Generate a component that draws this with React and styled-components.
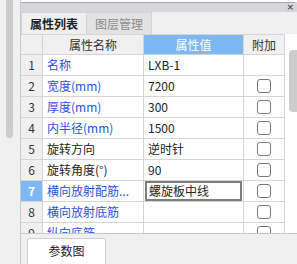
import React from "react";
import styled, { createGlobalStyle } from "styled-components";

const rows = [
  { no: 1, name: "名称", value: "LXB-1", link: true, check: false },
  { no: 2, name: "宽度(mm)", value: "7200", link: true, check: true },
  { no: 3, name: "厚度(mm)", value: "300", link: true, check: true },
  { no: 4, name: "内半径(mm)", value: "1500", link: true, check: true },
  { no: 5, name: "旋转方向", value: "逆时针", link: false, check: true },
  { no: 6, name: "旋转角度(°)", value: "90", link: false, check: true },
  { no: 7, name: "横向放射配筋...", value: "螺旋板中线", link: true, check: true, selected: true },
  { no: 8, name: "横向放射底筋", value: "", link: true, check: true },
  { no: 9, name: "纵向底筋", value: "", link: true, check: true },
];

const GlobalStyle = createGlobalStyle`
  body {
    margin: 0;
    background: #f0f0f0;
    font-family: "Noto Sans CJK SC", "Noto Sans", sans-serif;
    font-size: 12px;
    color: #222;
  }
`;

const Screen = styled.div`
  width: 297px;
  height: 264px;
  display: flex;
  overflow: hidden;
  background: #f0f0f0;
`;

const LeftStrip = styled.div`
  width: 21px;
  padding-left: 6px;
  box-sizing: border-box;
  border-right: 1px solid #c9c9c9;
`;

const LeftThumb = styled.div`
  width: 7px;
  height: 138px;
  background: #cdcdcd;
  border-radius: 0 0 4px 4px;
`;

const Panel = styled.div`
  flex: 1;
  display: flex;
  flex-direction: column;
  min-width: 0;
`;

const TopStub = styled.div`
  height: 8px;
  background: #fff;
  border-top: 2px solid #fff;
  box-sizing: border-box;
  position: relative;

  &::before {
    content: "";
    position: absolute;
    left: 0;
    right: 2px;
    top: 0;
    height: 1px;
    background: #a9a9a9;
  }
`;

const TitleBar = styled.div`
  height: 10px;
  background: #d6d7da;
  display: flex;
  justify-content: flex-end;
  align-items: center;
  padding-right: 3px;
`;

const Close = styled.span`
  font-family: "DejaVu Sans", sans-serif;
  font-size: 9px;
  line-height: 10px;
  color: #555;
  font-weight: bold;
`;

const TabStrip = styled.div`
  height: 24px;
  display: flex;
  align-items: flex-end;
  background: #f0f0f0;
`;

const Tab = styled.div`
  height: 22px;
  box-sizing: border-box;
  padding: 0 8px;
  display: flex;
  align-items: center;
  font-size: 12px;
  line-height: 22px;
  border: 1px solid #d4d4d4;
  border-bottom: none;
  background: ${(p) => (p.active ? "#f0f0f0" : "#e2e2e2")};
  color: ${(p) => (p.active ? "#222" : "#8c8c8c")};
  font-weight: ${(p) => (p.active ? "bold" : "normal")};
  margin-left: ${(p) => (p.active ? "0" : "-1px")};
`;

const TableArea = styled.div`
  height: 199px;
  display: flex;
  background: #fff;
`;

const Grid = styled.div`
  width: 264px;
  height: 100%;
  overflow: hidden;
  display: grid;
  grid-template-columns: 22px 101px 100px 41px;
  grid-auto-rows: 21px;
  align-content: start;
`;

const Cell = styled.div`
  box-sizing: border-box;
  border-right: 1px solid #d5d5d5;
  border-bottom: 1px solid #d5d5d5;
  display: flex;
  align-items: center;
  justify-content: ${(p) => (p.center ? "center" : "flex-start")};
  padding: 0 ${(p) => (p.center ? "0" : "4px")};
  white-space: nowrap;
  overflow: hidden;
  font-size: 12px;
  line-height: 20px;
  background: ${(p) => p.bg || "#fff"};
  color: ${(p) => p.color || "#222"};
  font-weight: ${(p) => (p.bold ? "bold" : "normal")};
`;

const HeadCell = styled(Cell)`
  border-top: 1px solid #d5d5d5;
  color: ${(p) => p.color || "#333"};
  background: ${(p) => p.bg || "#f0f0f0"};
`;

const EditBox = styled.div`
  flex: 1;
  height: 20px;
  box-sizing: border-box;
  margin: 0 -3px;
  padding: 0 2px;
  border: 2px solid #7d7d7d;
  line-height: 16px;
`;

const Check = styled.span`
  width: 14px;
  height: 14px;
  box-sizing: border-box;
  border: 1px solid #7a7a7a;
  border-radius: 3px;
  background: #fff;
`;

const ScrollTrack = styled.div`
  flex: 1;
  padding: 16px 0 0 4px;
`;

const ScrollThumb = styled.div`
  width: 8px;
  height: 62px;
  background: #cdcdcd;
  border-radius: 4px 0 0 4px;
`;

const BottomBar = styled.div`
  flex: 1;
  border-top: 1px solid #cacaca;
  background: #f0f0f0;
  padding: 4px 0 0 6px;
`;

const BottomTab = styled.div`
  width: 79px;
  height: 30px;
  box-sizing: border-box;
  background: #fff;
  border: 1px solid #cfcfcf;
  border-radius: 3px 3px 0 0;
  text-align: center;
  padding-top: 4px;
  font-size: 12px;
  line-height: 16px;
  color: #222;
`;

const BLUE = "#7db8f4";

const App = () => (
  <>
    <GlobalStyle />
    <Screen>
      <LeftStrip>
        <LeftThumb />
      </LeftStrip>
      <Panel>
        <TopStub />
        <TitleBar>
          <Close>×</Close>
        </TitleBar>
        <TabStrip>
          <Tab active>属性列表</Tab>
          <Tab>图层管理</Tab>
        </TabStrip>
        <TableArea>
          <Grid>
            <HeadCell />
            <HeadCell center>属性名称</HeadCell>
            <HeadCell center bg={BLUE} color="#fff">
              属性值
            </HeadCell>
            <HeadCell center>附加</HeadCell>
            {rows.map((r) => (
              <React.Fragment key={r.no}>
                <Cell
                  center
                  bg={r.selected ? BLUE : "#f0f0f0"}
                  color={r.selected ? "#fff" : "#333"}
                  bold={r.selected}
                >
                  {r.no}
                </Cell>
                <Cell color={r.link ? "#2a52e0" : "#222"}>{r.name}</Cell>
                <Cell>
                  {r.selected ? <EditBox>{r.value}</EditBox> : r.value}
                </Cell>
                <Cell center>{r.check && <Check />}</Cell>
              </React.Fragment>
            ))}
          </Grid>
          <ScrollTrack>
            <ScrollThumb />
          </ScrollTrack>
        </TableArea>
        <BottomBar>
          <BottomTab>参数图</BottomTab>
        </BottomBar>
      </Panel>
    </Screen>
  </>
);

export default App;
